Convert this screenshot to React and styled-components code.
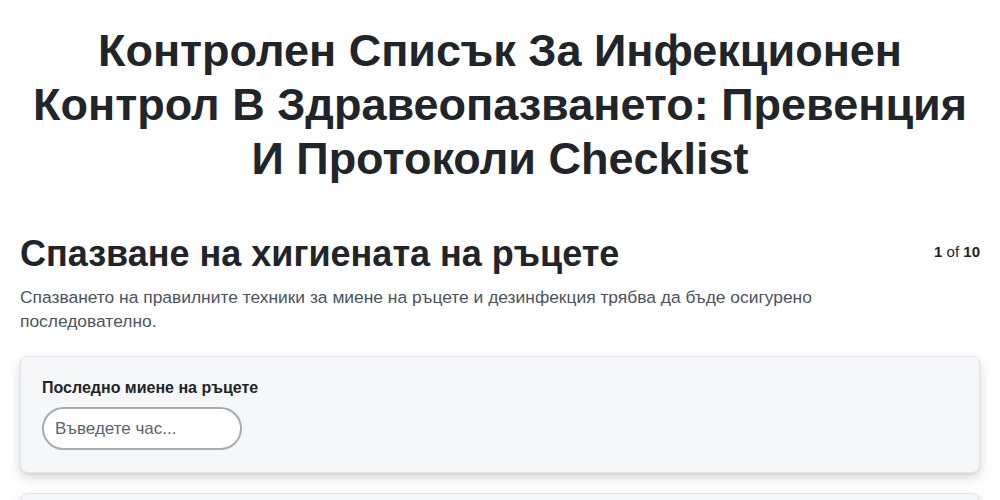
import React from "react";
import styled, { createGlobalStyle } from "styled-components";

const GlobalStyle = createGlobalStyle`
  * { box-sizing: border-box; }
  body {
    margin: 0;
    background: #ffffff;
    font-family: "Liberation Sans", Arial, sans-serif;
    color: #212529;
  }
`;

const Page = styled.main`
  padding: 24px 20px 40px;
`;

const Title = styled.h1`
  margin: 0 0 46px;
  text-align: center;
  font-size: 45px;
  line-height: 54px;
  font-weight: 700;
  color: #212529;
  padding: 0 10px;
`;

const SectionHeader = styled.div`
  display: flex;
  justify-content: space-between;
  align-items: flex-start;
`;

const SectionTitle = styled.h2`
  margin: 0;
  font-size: 36px;
  line-height: 44px;
  font-weight: 700;
  color: #212529;
`;

const Counter = styled.div`
  font-size: 15px;
  line-height: 20px;
  margin-top: 10px;
  color: #212529;
  b { font-weight: 700; }
`;

const Description = styled.p`
  margin: 9px 0 23px;
  max-width: 860px;
  font-size: 17.4px;
  line-height: 24px;
  color: #4b5361;
`;

const Questions = styled.div`
  display: flex;
  flex-direction: column;
  gap: 20px;
`;

const Card = styled.section`
  background: #f6f7f9;
  border: 1px solid #e4e6ec;
  border-radius: 8px;
  padding: 21px 21px 22px;
  box-shadow: 0 5px 12px rgba(0, 0, 0, 0.15), 0 1px 3px rgba(0, 0, 0, 0.08);
  display: flex;
  flex-direction: column;
  gap: 9px;
`;

const Label = styled.label`
  font-size: 16px;
  line-height: 20px;
  font-weight: 700;
  color: #212529;
`;

const TextInput = styled.input`
  width: 200px;
  height: 43px;
  border: 2px solid #a6acb5;
  border-radius: 22px;
  background: #ffffff;
  padding: 0 11px;
  font-family: "Liberation Sans", Arial, sans-serif;
  font-size: 17px;
  color: #212529;
  outline: none;
  &::placeholder { color: #5b6270; }
`;

const questions = [
  { id: "last-wash", label: "Последно миене на ръцете", placeholder: "Въведете час..." },
  { id: "sanitizer", label: "Наличност на дезинфектант", placeholder: "Въведете количество..." },
];

export default function App() {
  return (
    <>
      <GlobalStyle />
      <Page>
        <Title>
          Контролен Списък За Инфекционен Контрол В Здравеопазването: Превенция И Протоколи Checklist
        </Title>
        <SectionHeader>
          <SectionTitle>Спазване на хигиената на ръцете</SectionTitle>
          <Counter>
            <b>1</b> of <b>10</b>
          </Counter>
        </SectionHeader>
        <Description>
          Спазването на правилните техники за миене на ръцете и дезинфекция трябва да бъде осигурено последователно.
        </Description>
        <Questions>
          {questions.map((q) => (
            <Card key={q.id}>
              <Label htmlFor={q.id}>{q.label}</Label>
              <TextInput id={q.id} type="text" placeholder={q.placeholder} />
            </Card>
          ))}
        </Questions>
      </Page>
    </>
  );
}
